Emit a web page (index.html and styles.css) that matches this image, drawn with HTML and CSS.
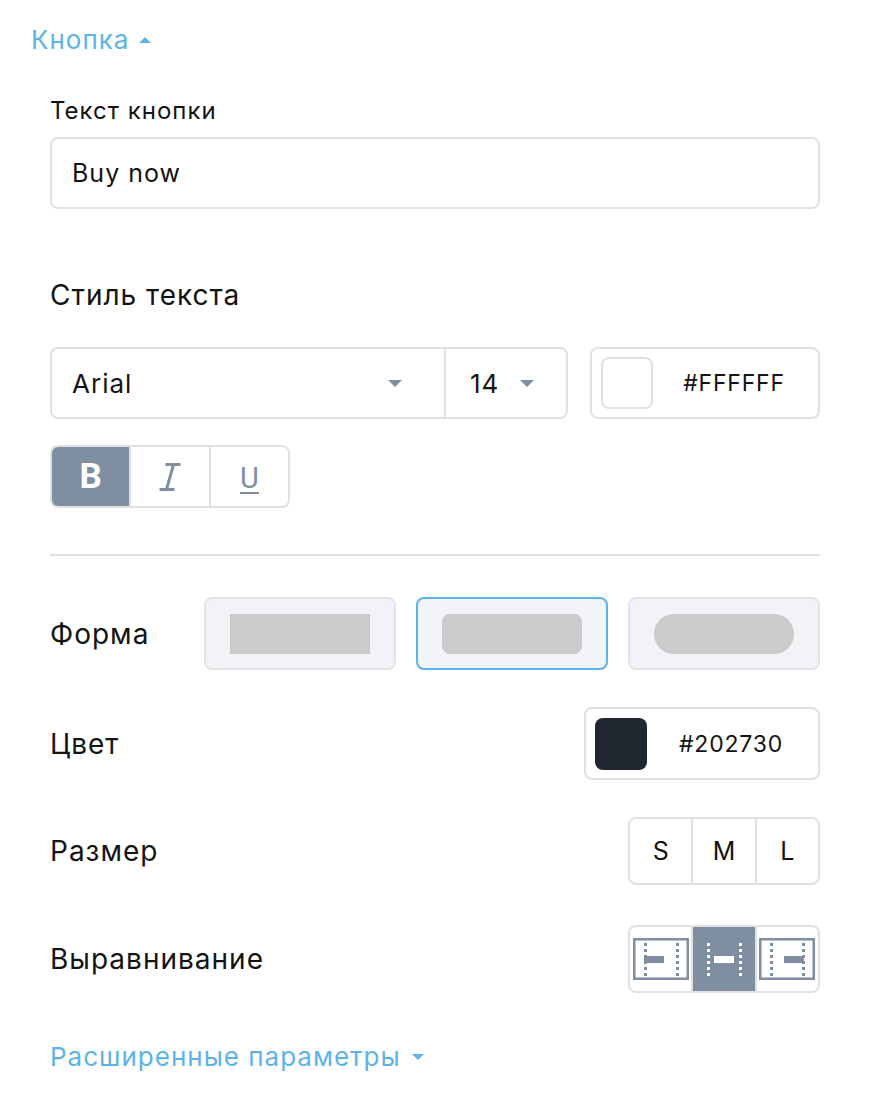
FILE: index.html
```html
<!DOCTYPE html>
<html lang="ru">
<head>
<meta charset="utf-8">
<title>Кнопка</title>
<link rel="stylesheet" href="styles.css">
</head>
<body>
<div class="page">
  <div class="toggle">Кнопка <span class="caret caret-up"></span></div>

  <div class="panel">
    <div class="label">Текст кнопки</div>
    <div class="field input">Buy now</div>

    <div class="label label-lg">Стиль текста</div>
    <div class="font-row">
      <div class="field select">
        <div class="select-part font-name">
          <span>Arial</span>
          <span class="caret caret-down gray"></span>
        </div>
        <div class="select-part font-size">
          <span>14</span>
          <span class="caret caret-down gray"></span>
        </div>
      </div>
      <div class="field color-box">
        <span class="swatch swatch-white"></span>
        <span class="hex">#FFFFFF</span>
      </div>
    </div>

    <div class="seg biu">
      <div class="seg-item active b">B</div>
      <div class="seg-item i">
        <svg width="22" height="28" viewBox="0 0 22 28">
          <path d="M6.5 1.5H21.5M0.5 26.5H15.5M14.5 1.5L7.5 26.5" fill="none" stroke="#7f8fa1" stroke-width="3"/>
        </svg>
      </div>
      <div class="seg-item u"><span>U</span></div>
    </div>

    <div class="divider"></div>

    <div class="row row-shape">
      <div class="row-label">Форма</div>
      <div class="shapes">
        <div class="shape"><span class="shape-fill square"></span></div>
        <div class="shape selected"><span class="shape-fill rounded"></span></div>
        <div class="shape"><span class="shape-fill pill"></span></div>
      </div>
    </div>

    <div class="row row-color">
      <div class="row-label">Цвет</div>
      <div class="field color-box wide">
        <span class="swatch swatch-dark"></span>
        <span class="hex">#202730</span>
      </div>
    </div>

    <div class="row row-size">
      <div class="row-label">Размер</div>
      <div class="seg size">
        <div class="seg-item">S</div>
        <div class="seg-item">M</div>
        <div class="seg-item">L</div>
      </div>
    </div>

    <div class="row row-align">
      <div class="row-label">Выравнивание</div>
      <div class="seg align">
        <div class="seg-item">
          <svg width="56" height="42" viewBox="0 0 56 42">
            <rect x="1.25" y="1.25" width="53.5" height="39.5" fill="none" stroke="#7f8fa1" stroke-width="2.5"/>
            <line x1="12.5" y1="5" x2="12.5" y2="38" stroke="#7f8fa1" stroke-width="3" stroke-dasharray="3 3"/>
            <line x1="44.5" y1="5" x2="44.5" y2="38" stroke="#7f8fa1" stroke-width="3" stroke-dasharray="3 3"/>
            <rect x="11" y="18" width="20" height="7" fill="#7f8fa1"/>
          </svg>
        </div>
        <div class="seg-item active">
          <svg width="56" height="42" viewBox="0 0 56 42">
            <line x1="12.5" y1="5" x2="12.5" y2="38" stroke="#fff" stroke-width="3" stroke-dasharray="3 3"/>
            <line x1="44.5" y1="5" x2="44.5" y2="38" stroke="#fff" stroke-width="3" stroke-dasharray="3 3"/>
            <rect x="18" y="18" width="20" height="7" fill="#fff"/>
          </svg>
        </div>
        <div class="seg-item">
          <svg width="56" height="42" viewBox="0 0 56 42">
            <rect x="1.25" y="1.25" width="53.5" height="39.5" fill="none" stroke="#7f8fa1" stroke-width="2.5"/>
            <line x1="12.5" y1="5" x2="12.5" y2="38" stroke="#7f8fa1" stroke-width="3" stroke-dasharray="3 3"/>
            <line x1="44.5" y1="5" x2="44.5" y2="38" stroke="#7f8fa1" stroke-width="3" stroke-dasharray="3 3"/>
            <rect x="25" y="18" width="20" height="7" fill="#7f8fa1"/>
          </svg>
        </div>
      </div>
    </div>

    <div class="link">Расширенные параметры <span class="caret caret-down"></span></div>
  </div>
</div>
</body>
</html>
```

FILE: styles.css
```css
* {
  box-sizing: border-box;
}

body {
  margin: 0;
  background: #fff;
  font-family: Inter, Roboto, "Noto Sans", "Liberation Sans", sans-serif;
  letter-spacing: 1px;
  color: #131313;
}

.page {
  width: 876px;
  padding: 24px 0 0 31px;
}

.toggle,
.link {
  color: #5cb3ea;
  font-size: 26px;
  line-height: 32px;
  display: flex;
  align-items: center;
}

.caret {
  display: inline-block;
  width: 0;
  height: 0;
  border-left: 6px solid transparent;
  border-right: 6px solid transparent;
}

.caret-up {
  border-bottom: 6px solid #5cb3ea;
  margin-left: 10px;
}

.caret-down {
  border-top: 6px solid #5cb3ea;
  margin-left: 11px;
}

.caret-down.gray {
  border-left-width: 7px;
  border-right-width: 7px;
  border-top: 7px solid #7f8fa1;
  margin-left: 0;
}

.panel {
  margin-left: 19px;
  width: 770px;
}

.label {
  margin-top: 40px;
  font-size: 24px;
  line-height: 30px;
}

.label-lg {
  margin-top: 71px;
  font-size: 28px;
}

.field {
  border: 2px solid #e1e1e1;
  border-radius: 8px;
  background: #fff;
}

.input {
  margin-top: 11px;
  height: 72px;
  padding: 0 20px;
  display: flex;
  align-items: center;
  font-size: 25px;
}

.font-row {
  margin-top: 37px;
  display: flex;
  gap: 22px;
  height: 72px;
}

.select {
  width: 518px;
  display: flex;
  font-size: 26px;
}

.select-part {
  display: flex;
  align-items: center;
  justify-content: space-between;
}

.font-name {
  width: 394px;
  padding: 0 42px 0 20px;
  border-right: 2px solid #e1e1e1;
}

.font-size {
  flex: 1;
  padding: 0 32px 0 24px;
}

.color-box {
  width: 230px;
  display: flex;
  align-items: center;
  padding: 0 9px;
  font-size: 23px;
  letter-spacing: 0.8px;
}

.color-box.wide {
  width: 236px;
  height: 73px;
}

.swatch {
  width: 52px;
  height: 52px;
  border-radius: 8px;
  flex: none;
}

.swatch-white {
  border: 2px solid #e1e1e1;
}

.swatch-dark {
  background: #202730;
}

.hex {
  flex: 1;
  text-align: center;
  padding-left: 6px;
}

.seg {
  display: flex;
  border: 2px solid #e1e1e1;
  border-radius: 8px;
  overflow: hidden;
  background: #fff;
}

.seg-item {
  display: flex;
  align-items: center;
  justify-content: center;
  border-left: 2px solid #e1e1e1;
}

.seg-item:first-child {
  border-left: none;
}

.seg-item.active {
  background: #7f8fa1;
  color: #fff;
}

.biu {
  margin-top: 26px;
  width: 240px;
  height: 63px;
  letter-spacing: 0;
}

.biu .seg-item {
  flex: 1;
  color: #7f8fa1;
}

.biu .b {
  color: #fff;
  font-family: Roboto, "Liberation Sans", sans-serif;
  font-weight: 700;
  font-size: 35px;
}

.biu .u {
  font-family: Roboto, "Liberation Sans", sans-serif;
  font-size: 29px;
}

.biu .u span {
  display: inline-block;
  line-height: 28px;
  padding-top: 4px;
  border-bottom: 2.5px solid #7f8fa1;
}

.divider {
  margin-top: 46px;
  height: 2px;
  background: #e1e1e1;
}

.row {
  display: flex;
  justify-content: space-between;
  align-items: center;
}

.row-label {
  font-size: 28px;
}

.row-shape {
  margin-top: 41px;
}

.shapes {
  display: flex;
  gap: 20px;
}

.shape {
  width: 192px;
  height: 73px;
  background: #f1f3f7;
  border: 2px solid #e3e4e6;
  border-radius: 8px;
  display: flex;
  align-items: center;
  justify-content: center;
}

.shape.selected {
  border-color: #5cb3ea;
}

.shape-fill {
  width: 140px;
  height: 40px;
  background: #cbcbcb;
}

.shape-fill.rounded {
  border-radius: 8px;
}

.shape-fill.pill {
  border-radius: 20px;
}

.row-color {
  margin-top: 37px;
}

.row-size {
  margin-top: 37px;
}

.size,
.align {
  width: 192px;
  height: 68px;
}

.size .seg-item,
.align .seg-item {
  flex: 1;
  font-size: 25px;
  letter-spacing: 0;
}

.row-align {
  margin-top: 40px;
}

.link {
  margin-top: 48px;
}
```
